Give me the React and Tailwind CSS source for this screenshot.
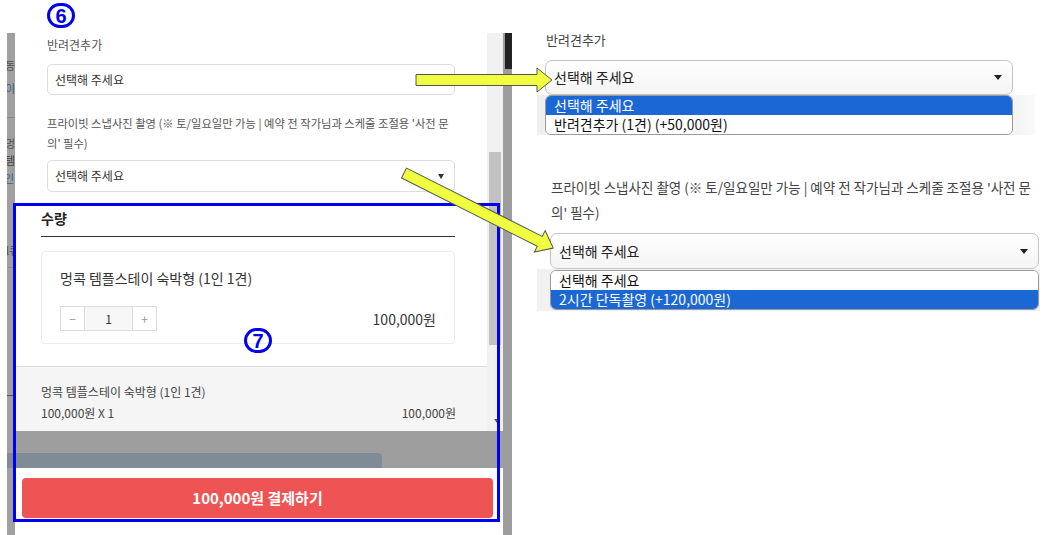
import React from "react";

function Circled({ n }) {
  return (
    <div className="w-[28px] h-[25px] rounded-full border-[3px] border-[#0000ee] flex items-center justify-center text-[#0000ee] font-bold text-[20px] leading-none font-['Liberation_Sans',sans-serif]">
      {n}
    </div>
  );
}

function Caret({ color = "border-t-[#222]", w = "border-l-[4px] border-r-[4px]", h = "border-t-[5px]" }) {
  return <span className={`w-0 h-0 border-l-transparent border-r-transparent ${w} ${h} ${color}`} />;
}

function Strip() {
  return (
    <div className="w-[8px] bg-[#a0a0a0] flex flex-col overflow-hidden text-[11px] leading-[16px]">
      <div className="mt-[24px] ml-[-2px] text-[#505050] whitespace-nowrap">동</div>
      <div className="mt-[7px] ml-[-2px] text-[#3d5e86] whitespace-nowrap">이</div>
      <div className="mt-[21px] h-px bg-[#878787]" />
      <div className="mt-[17px] ml-[-2px] text-[#505050] whitespace-nowrap">멍</div>
      <div className="mt-[1px] ml-[-2px] text-[#404040] whitespace-nowrap">템</div>
      <div className="mt-[2px] ml-[-3px] text-[#3d5e86] whitespace-nowrap">인</div>
      <div className="mt-[56px] ml-[-1px] text-[#505050] whitespace-nowrap">l큐</div>
      <div className="mt-[9px] h-px bg-[#8c8c8c]" />
      <div className="mt-[127px] h-px bg-[#555]" />
      <div className="mt-[57px] h-[15px] bg-[#808b96]" />
    </div>
  );
}

function LeftPanel() {
  return (
    <div className="w-[472px] h-[398px] overflow-hidden bg-white flex flex-col">
      <div className="px-[32px] flex flex-col">
        <div className="mt-[2px] text-[12px] leading-[20px] text-[#555]">반려견추가</div>
        <div className="mt-[9px] h-[31px] border border-[#dcdcdc] rounded-[5px] flex items-center justify-between pl-[7px] pr-[10px] text-[12px] text-[#333]">
          <span>선택해 주세요</span>
          <Caret color="border-t-[#333]" w="border-l-[3.5px] border-r-[3.5px]" />
        </div>
        <div className="mt-[18px] text-[11.3px] leading-[20px] text-[#555] whitespace-nowrap">
          프라이빗 스냅사진 촬영 (※ 토/일요일만 가능 | 예약 전 작가님과 스케줄 조절용 '사전 문<br />의' 필수)
        </div>
        <div className="mt-[7px] h-[32px] border border-[#dcdcdc] rounded-[5px] flex items-center justify-between pl-[7px] pr-[10px] text-[12px] text-[#333]">
          <span>선택해 주세요</span>
          <Caret color="border-t-[#333]" w="border-l-[3.5px] border-r-[3.5px]" />
        </div>
      </div>
      <div className="pl-[26px] pr-[32px] flex flex-col">
        <div className="mt-[16px] h-[29px] border-b border-[#333] text-[14px] leading-[20px] font-bold text-[#222]">수량</div>
        <div className="mt-[14px] h-[93px] border border-[#ececec] rounded-[4px] flex flex-col px-[18px]">
          <div className="pt-[16px] text-[14px] leading-[20px] text-[#333]">멍콕 템플스테이 숙박형 (1인 1견)</div>
          <div className="mt-[18px] flex items-center justify-between">
            <div className="flex h-[25px] text-[12px] text-[#555]">
              <div className="w-[25px] border border-[#dcdcdc] flex items-center justify-center text-[#999]">−</div>
              <div className="w-[47px] border-y border-[#dcdcdc] bg-[#f7f7f7] flex items-center justify-center text-[#333]">1</div>
              <div className="w-[25px] border border-[#dcdcdc] flex items-center justify-center text-[#999]">+</div>
            </div>
            <div className="text-[14px] leading-[20px] text-[#333]">100,000원</div>
          </div>
        </div>
      </div>
      <div className="mt-[22px] border-t border-[#dcdcdc] bg-[#f5f5f5] h-[80px] pl-[26px] pr-[31px] pt-[15px] text-[12px] leading-[20px] text-[#444]">
        <div>멍콕 템플스테이 숙박형 (1인 1견)</div>
        <div className="mt-[1px] flex justify-between">
          <span>100,000원 X 1</span>
          <span>100,000원</span>
        </div>
      </div>
    </div>
  );
}

function Scrollbar() {
  return (
    <div className="w-[16px] h-[398px] bg-[#f1f1f1] flex flex-col items-center">
      <div className="mt-[119px] w-[12px] h-[193px] bg-[#c1c1c1]" />
      <div className="flex-1" />
      <div className="mb-[8px] ml-[4px] w-0 h-0 border-l-[3px] border-r-[3px] border-t-[4px] border-l-transparent border-r-transparent border-t-[#555]" />
    </div>
  );
}

function NativeSelect({ width, height }) {
  return (
    <div
      className={`${width} ${height} border border-[#c4c4c4] rounded-[7px] bg-[linear-gradient(#ffffff,#f4f4f4)] flex items-center justify-between pl-[8px] pr-[10px] text-[14px] text-[#222]`}
    >
      <span>선택해 주세요</span>
      <Caret w="border-l-[4.5px] border-r-[4.5px]" h="border-t-[5px]" />
    </div>
  );
}

function OptionList({ width, options, active }) {
  return (
    <div className={`${width} border border-[#9a9a9a] rounded-[6px] overflow-hidden bg-white text-[14px] leading-[19px]`}>
      {options.map((o, i) => (
        <div
          key={i}
          className={`h-[19px] pl-[8px] whitespace-nowrap ${i === active ? "bg-[#1b67d3] text-white" : "bg-white text-[#111]"}`}
        >
          {o}
        </div>
      ))}
    </div>
  );
}

function RightSide() {
  return (
    <div className="flex-1 flex flex-col">
      <div className="mt-[30px] ml-[34px] text-[13px] leading-[20px] text-[#444]">반려견추가</div>
      <div className="mt-[10px] ml-[33px]">
        <NativeSelect width="w-[468px]" height="h-[35px]" />
      </div>
      <div className="ml-[25px] w-[498px] h-[40px] pl-[8px] bg-[linear-gradient(to_right,#efefef,#f1f1f1_94%,#fafafa)]">
        <OptionList width="w-[468px]" options={["선택해 주세요", "반려견추가 (1견) (+50,000원)"]} active={0} />
      </div>
      <div className="mt-[40px] ml-[39px] text-[13.5px] leading-[25px] text-[#444] whitespace-nowrap">
        프라이빗 스냅사진 촬영 (※ 토/일요일만 가능 | 예약 전 작가님과 스케줄 조절용 '사전 문<br />의' 필수)
      </div>
      <div className="mt-[8px] ml-[38px]">
        <NativeSelect width="w-[489px]" height="h-[36px]" />
      </div>
      <div className="ml-[25px] w-[503px] h-[42px] pl-[13px] pt-[1px] bg-[#f1f1f1]">
        <OptionList width="w-[489px]" options={["선택해 주세요", "2시간 단독촬영 (+120,000원)"]} active={1} />
      </div>
    </div>
  );
}

function Arrow({ x, y, len, angle }) {
  const hl = 15;
  const bw = 5.5;
  const hw = 12;
  const b = len - hl;
  const pts = `0,${-bw} ${b},${-bw} ${b},${-hw} ${len},0 ${b},${hw} ${b},${bw} 0,${bw}`;
  return (
    <g transform={`translate(${x} ${y}) rotate(${angle})`}>
      <polygon points={pts} fill="#efff3f" stroke="#555" strokeWidth="1" strokeLinejoin="miter" />
    </g>
  );
}

export default function App() {
  return (
    <div className="relative w-[1053px] h-[535px] overflow-hidden bg-white flex font-['Noto_Sans_CJK_KR','Noto_Sans',sans-serif]">
      <div className="w-[512px] shrink-0 flex flex-col">
        <div className="h-[33px] pl-[47px] pt-[3px]">
          <Circled n="6" />
        </div>
        <div className="flex flex-1 min-h-0">
          <div className="w-[7px]" />
          <Strip />
          <div className="w-[488px] flex flex-col">
            <div className="flex">
              <LeftPanel />
              <Scrollbar />
            </div>
            <div className="h-[37px] bg-[#9e9e9e] pt-[22px]">
              <div className="w-[367px] h-[15px] bg-[#808b96] rounded-tr-[4px]" />
            </div>
            <div className="flex-1 bg-white pt-[10px] pl-[7px]">
              <div className="w-[471px] h-[40px] bg-[#ee5454] rounded-[4px] flex items-center justify-center text-white font-bold text-[15px]">
                100,000원 결제하기
              </div>
            </div>
          </div>
          <div className="w-[9px] bg-[#9d9d9d] pl-[2px]">
            <div className="h-[36px] bg-[#222]" />
          </div>
        </div>
      </div>
      <RightSide />

      {/* annotation overlays */}
      <div className="absolute left-[13px] top-[203px] w-[487px] h-[319px] border-[3px] border-[#0000f0] pointer-events-none" />
      <div className="absolute left-[244px] top-[328px]">
        <Circled n="7" />
      </div>
      <svg className="absolute left-0 top-0 pointer-events-none" width="1053" height="535">
        <Arrow x={416} y={80} len={136} angle={0} />
        <Arrow x={404} y={173} len={167} angle={26.7} />
      </svg>
    </div>
  );
}
